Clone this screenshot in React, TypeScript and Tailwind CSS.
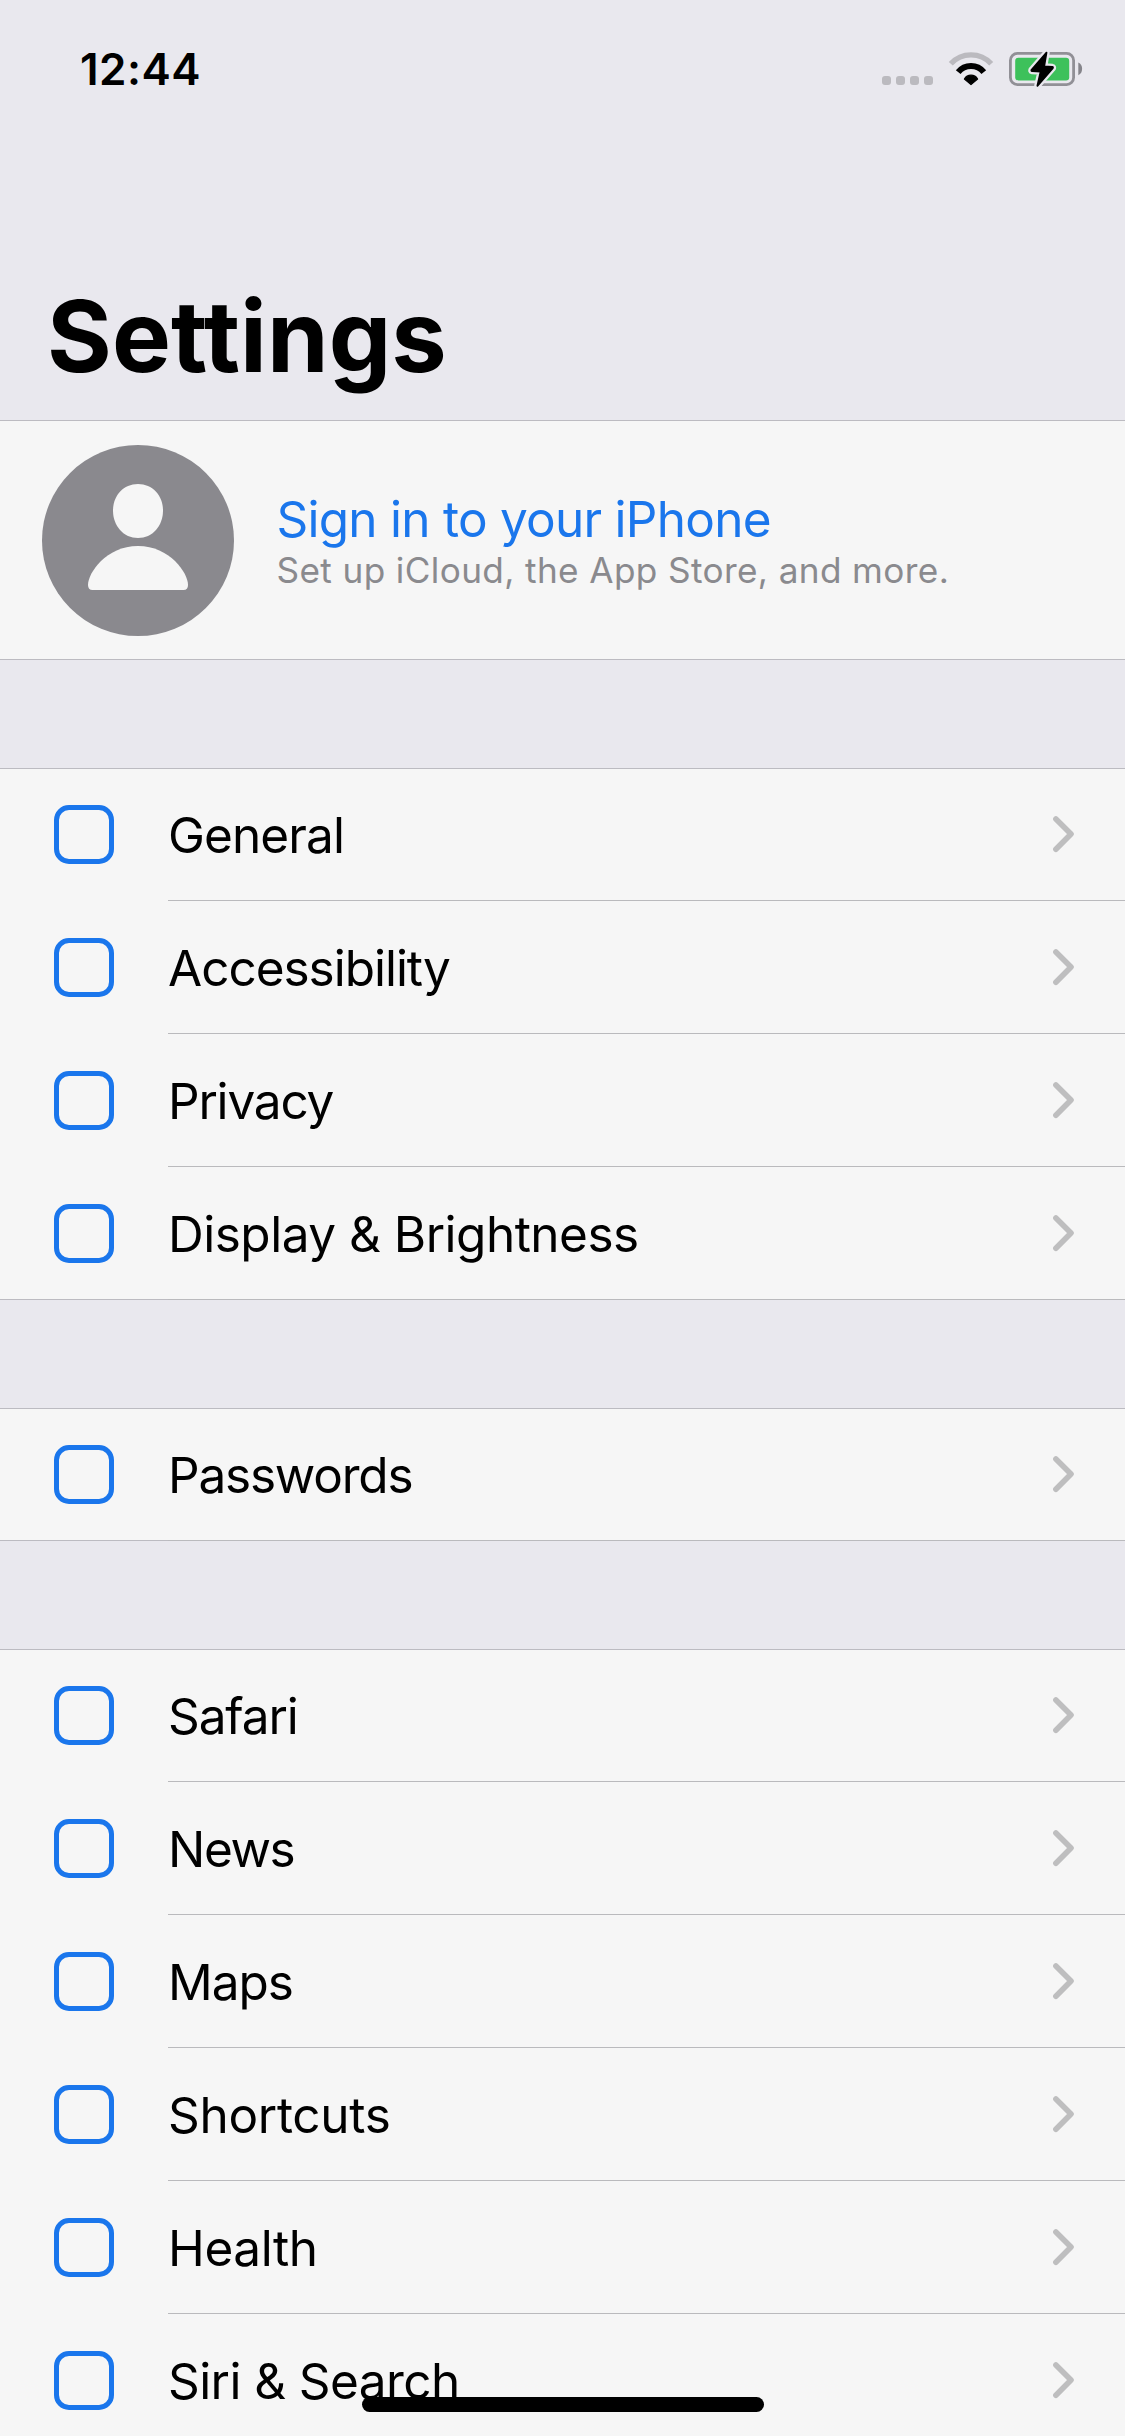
import React from 'react';

type Item = { label: string; tracking: string };

const sections: Item[][] = [
  [
    { label: 'General', tracking: 'tracking-[-0.9px]' },
    { label: 'Accessibility', tracking: 'tracking-[-1.02px]' },
    { label: 'Privacy', tracking: 'tracking-[-1.2px]' },
    { label: 'Display & Brightness', tracking: 'tracking-[-0.5px]' },
  ],
  [{ label: 'Passwords', tracking: 'tracking-[-1.2px]' }],
  [
    { label: 'Safari', tracking: 'tracking-[-1.1px]' },
    { label: 'News', tracking: 'tracking-[-1.4px]' },
    { label: 'Maps', tracking: 'tracking-[-1px]' },
    { label: 'Shortcuts', tracking: 'tracking-[-0.3px]' },
    { label: 'Health', tracking: 'tracking-[-0.4px]' },
    { label: 'Siri & Search', tracking: 'tracking-[-0.58px]' },
  ],
];

function StatusBar() {
  return (
    <div className="flex h-[120px] items-start justify-between pr-[39px] pl-20">
      <span className="mt-[39px] text-[44px] leading-[60px] font-semibold tracking-[0.5px]">12:44</span>
      <div className="mt-12 flex">
        <div className="mt-7 mr-3 flex gap-[5px]">
          {[0, 1, 2, 3].map((n) => (
            <span key={n} className="size-[9px] rounded-[3px] bg-[#bbbabf]" />
          ))}
        </div>
        <svg width="60" height="42" viewBox="0 0 60 42" fill="none">
          <path d="M5.8 15.8A27.4 27.4 0 0 1 46.2 15.8" stroke="#bbbabf" strokeWidth="5.4" />
          <path d="M13.2 24.2A16.4 16.4 0 0 1 38.8 24.2" stroke="#000" strokeWidth="6" />
          <path d="M19.4 31A7.6 7.6 0 0 1 32.6 31L26 36.600Z" fill="#000" stroke="#000" strokeWidth="1.2" strokeLinejoin="round" />
        </svg>
        <svg width="81" height="42" viewBox="0 0 81 42">
          <rect x="5.4" y="5.4" width="63.2" height="31.2" rx="7" fill="none" stroke="#919096" strokeWidth="2.8" />
          <rect x="10.2" y="9.8" width="54" height="22.6" rx="3.2" fill="#3dc15b" />
          <path d="M73.3 14.6C78.4 16.4 78.4 25.4 73.3 27.2Z" fill="#85848a" />
          <path
            d="M41.5 4.6L26.6 21.8Q26 22.9 27 23L35.6 23.6L32.4 37.8L47.8 20.2Q48.3 19.2 47.4 19L39.2 18.4Z"
            fill="#000"
            stroke="#e9e8ee"
            strokeWidth="6.4"
            strokeLinejoin="round"
          />
          <path
            d="M41.5 4.6L26.6 21.8Q26 22.9 27 23L35.6 23.6L32.4 37.8L47.8 20.2Q48.3 19.2 47.4 19L39.2 18.4Z"
            fill="#000"
            stroke="#000"
            strokeWidth="1.8"
            strokeLinejoin="round"
          />
        </svg>
      </div>
    </div>
  );
}

function Profile() {
  return (
    <section className="flex h-60 border-y border-[#bcbbc1] bg-[#f6f6f6] pl-[42px]">
      <svg className="mt-6 shrink-0" width="192" height="191" viewBox="0 0 192 191">
        <ellipse cx="96" cy="95.5" rx="96" ry="95.5" fill="#8a898e" />
        <path
          d="M96 39C110.5 39 121 50.5 121 65.5C121 81 110.5 93 96 93C81.5 93 71 81 71 65.5C71 50.5 81.5 39 96 39Z"
          fill="#f6f6f6"
        />
        <path
          d="M50.5 145C47.5 145 46 143 46 140C46 128 64 101 96 101C128 101 146 128 146 140C146 143 144.5 145 141.5 145Z"
          fill="#f6f6f6"
        />
      </svg>
      <div className="mt-[68px] ml-[42.5px] flex flex-col whitespace-nowrap">
        <span className="text-[49.5px] leading-[60px] tracking-[-0.75px] text-[#1a76ec]">Sign in to your iPhone</span>
        <span className="text-[35.2px] leading-[42px] tracking-[0.37px] text-[#8a8a8e]">
          Set up iCloud, the App Store, and more.
        </span>
      </div>
    </section>
  );
}

function Row({ item, first, last }: { item: Item; first: boolean; last: boolean }) {
  return (
    <li className={first ? '-mt-px flex h-[133px] items-start' : 'flex h-[133px] items-start'}>
      <span className={last ? 'h-full w-[168px] shrink-0 border-b border-[#bcbbc1]' : 'h-full w-[168px] shrink-0'}>
        <span className="mt-[37px] ml-[54px] block h-[59px] w-[60px] rounded-[15px] border-5 border-[#1a76ec]" />
      </span>
      <div className="flex h-full flex-1 items-start justify-between border-b border-[#bababd] pr-[48px]">
        <span className={'mt-[37px] text-[49.5px] leading-[60px] whitespace-nowrap ' + item.tracking}>
          {item.label}
        </span>
        <svg className="mt-[46px]" width="26" height="40" viewBox="0 0 26 40" fill="none">
          <path
            d="M4.9 4.9L20 20L4.9 35.3"
            stroke="#bebebf"
            strokeWidth="5.6"
            strokeLinecap="round"
            strokeLinejoin="round"
          />
        </svg>
      </div>
    </li>
  );
}

export default function App() {
  return (
    <main className="relative h-[2436px] w-[1125px] overflow-hidden bg-[#e9e8ee] font-[Inter,sans-serif] text-black">
      <header className="h-[420px]">
        <StatusBar />
        <h1 className="mt-[156px] ml-[47px] text-[99px] leading-[120px] font-bold tracking-[0.07px] [font-feature-settings:'calt'_0,'liga'_0]">
          Settings
        </h1>
      </header>
      <div className="flex flex-col gap-[108px]">
        <Profile />
        {sections.map((items) => (
          <ul key={items[0].label} className="border-t border-[#bcbbc1] bg-[#f6f6f6]">
            {items.map((item, i) => (
              <Row key={item.label} item={item} first={i === 0} last={i === items.length - 1} />
            ))}
          </ul>
        ))}
      </div>
      <div className="absolute top-[2397px] left-[362px] h-[15px] w-[402px] rounded-full bg-black" />
    </main>
  );
}
